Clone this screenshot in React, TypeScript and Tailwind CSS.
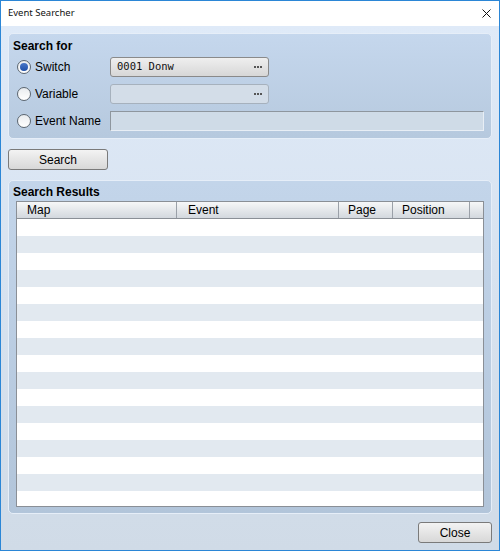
import React from "react";

const ui = { fontFamily: '"Liberation Sans", Arial, sans-serif' };

function Radio({ checked }: { checked?: boolean }) {
  return (
    <span className="relative inline-flex h-[14px] w-[14px] items-center justify-center rounded-full border border-[#5c6670] bg-gradient-to-b from-[#e9ecef] to-[#ffffff]">
      {checked && (
        <span className="h-[8px] w-[8px] rounded-full bg-gradient-to-b from-[#4a78c8] to-[#1f4fa8]" />
      )}
    </span>
  );
}

function Dots() {
  return (
    <span className="flex gap-[1px] items-center">
      <span className="h-[2px] w-[2px] bg-[#555]" />
      <span className="h-[2px] w-[2px] bg-[#555]" />
      <span className="h-[2px] w-[2px] bg-[#555]" />
    </span>
  );
}

function Btn({ label, className }: { label: string; className: string }) {
  return (
    <div
      className={
        "flex items-center justify-center rounded-[3px] border border-[#7a7a7a] bg-gradient-to-b from-[#f3f3f3] to-[#d8d8d8] text-[12px] text-black " +
        className
      }
      style={ui}
    >
      {label}
    </div>
  );
}

export default function App() {
  const rows = Array.from({ length: 18 });
  return (
    <div className="flex h-[551px] w-[500px] flex-col border border-[#2b86d6] bg-[#d0dbe8] overflow-hidden" style={ui}>
      {/* Title bar */}
      <div className="flex h-[25px] shrink-0 items-center justify-between bg-white pl-[7px] pr-[8px]">
        <span className="text-[9.5px] text-[#111]" style={{ fontFamily: '"Noto Sans", "Open Sans", sans-serif' }}>
          Event Searcher
        </span>
        <svg width="9" height="9" viewBox="0 0 9 9">
          <path d="M0.5 0.5 L8.5 8.5 M8.5 0.5 L0.5 8.5" stroke="#111" strokeWidth="1" />
        </svg>
      </div>

      {/* Body */}
      <div className="flex flex-1 flex-col bg-gradient-to-b from-[#dfeaf8] to-[#d0dbe7] px-[7px] pt-[7px]">
        {/* Search for panel */}
        <div className="h-[106px] rounded-[5px] border border-[#e6eef8] bg-gradient-to-b from-[#c5d7ed] to-[#b6c9de] pl-[4px] pr-[7px] pt-[4px]">
          <div className="h-[16px] text-[12px] font-bold leading-[16px] text-black">Search for</div>
          <div className="mt-[3px] flex flex-col gap-[7px]">
            <div className="flex h-[20px] items-center">
              <div className="flex w-[97px] items-center gap-[4px] pl-[4px] text-[12px] text-black">
                <Radio checked />
                <span>Switch</span>
              </div>
              <div className="flex h-[20px] w-[159px] items-center justify-between rounded-[3px] border border-[#8a8a8a] bg-gradient-to-b from-[#efefef] to-[#d7d7d7] pl-[6px] pr-[6px]">
                <span className="text-[10.5px] text-[#111]" style={{ fontFamily: '"DejaVu Sans Mono", "Liberation Mono", monospace' }}>
                  0001 Donw
                </span>
                <Dots />
              </div>
            </div>
            <div className="flex h-[20px] items-center">
              <div className="flex w-[97px] items-center gap-[4px] pl-[4px] text-[12px] text-black">
                <Radio />
                <span>Variable</span>
              </div>
              <div className="flex h-[20px] w-[159px] items-center justify-end rounded-[3px] border border-[#a6b1bd] bg-[#d3dde8] pr-[6px]">
                <Dots />
              </div>
            </div>
            <div className="flex h-[20px] items-center">
              <div className="flex w-[97px] items-center gap-[4px] pl-[4px] text-[12px] text-black">
                <Radio />
                <span>Event Name</span>
              </div>
              <div className="h-[20px] flex-1 border border-t-[#8e969e] border-l-[#8e969e] border-r-[#e8eef5] border-b-[#e8eef5] bg-[#cfdbe7]" />
            </div>
          </div>
        </div>

        {/* Search button */}
        <div className="mt-[10px] flex">
          <Btn label="Search" className="h-[21px] w-[100px]" />
        </div>

        {/* Results panel */}
        <div className="mt-[10px] flex h-[334px] flex-col rounded-[5px] border border-[#e6eef8] bg-gradient-to-b from-[#c3d5ea] to-[#b2c5da] pl-[7px] pr-[7px] pt-[2px]">
          <div className="-ml-[3px] h-[18px] text-[12px] font-bold leading-[18px] text-black">Search Results</div>
          <div className="flex h-[306px] flex-col overflow-hidden border border-[#8a8f96] bg-white">
            <div className="flex h-[17px] shrink-0 border-b border-[#8a8f96] bg-gradient-to-b from-[#f6f7f8] to-[#d3d8de] text-[12px] leading-[17px] text-black">
              <div className="w-[160px] border-r border-[#9aa0a8] pl-[10px]">Map</div>
              <div className="w-[162px] border-r border-[#9aa0a8] pl-[11px]">Event</div>
              <div className="w-[54px] border-r border-[#9aa0a8] pl-[9px]">Page</div>
              <div className="w-[77px] border-r border-[#9aa0a8] pl-[9px]">Position</div>
              <div className="flex-1" />
            </div>
            {rows.map((_, i) => (
              <div key={i} className={"h-[17px] shrink-0 " + (i % 2 === 1 ? "bg-[#e2e9f0]" : "bg-white")} />
            ))}
          </div>
        </div>

        {/* Close */}
        <div className="mt-[8px] flex justify-end">
          <Btn label="Close" className="h-[21px] w-[74px]" />
        </div>
      </div>
    </div>
  );
}
